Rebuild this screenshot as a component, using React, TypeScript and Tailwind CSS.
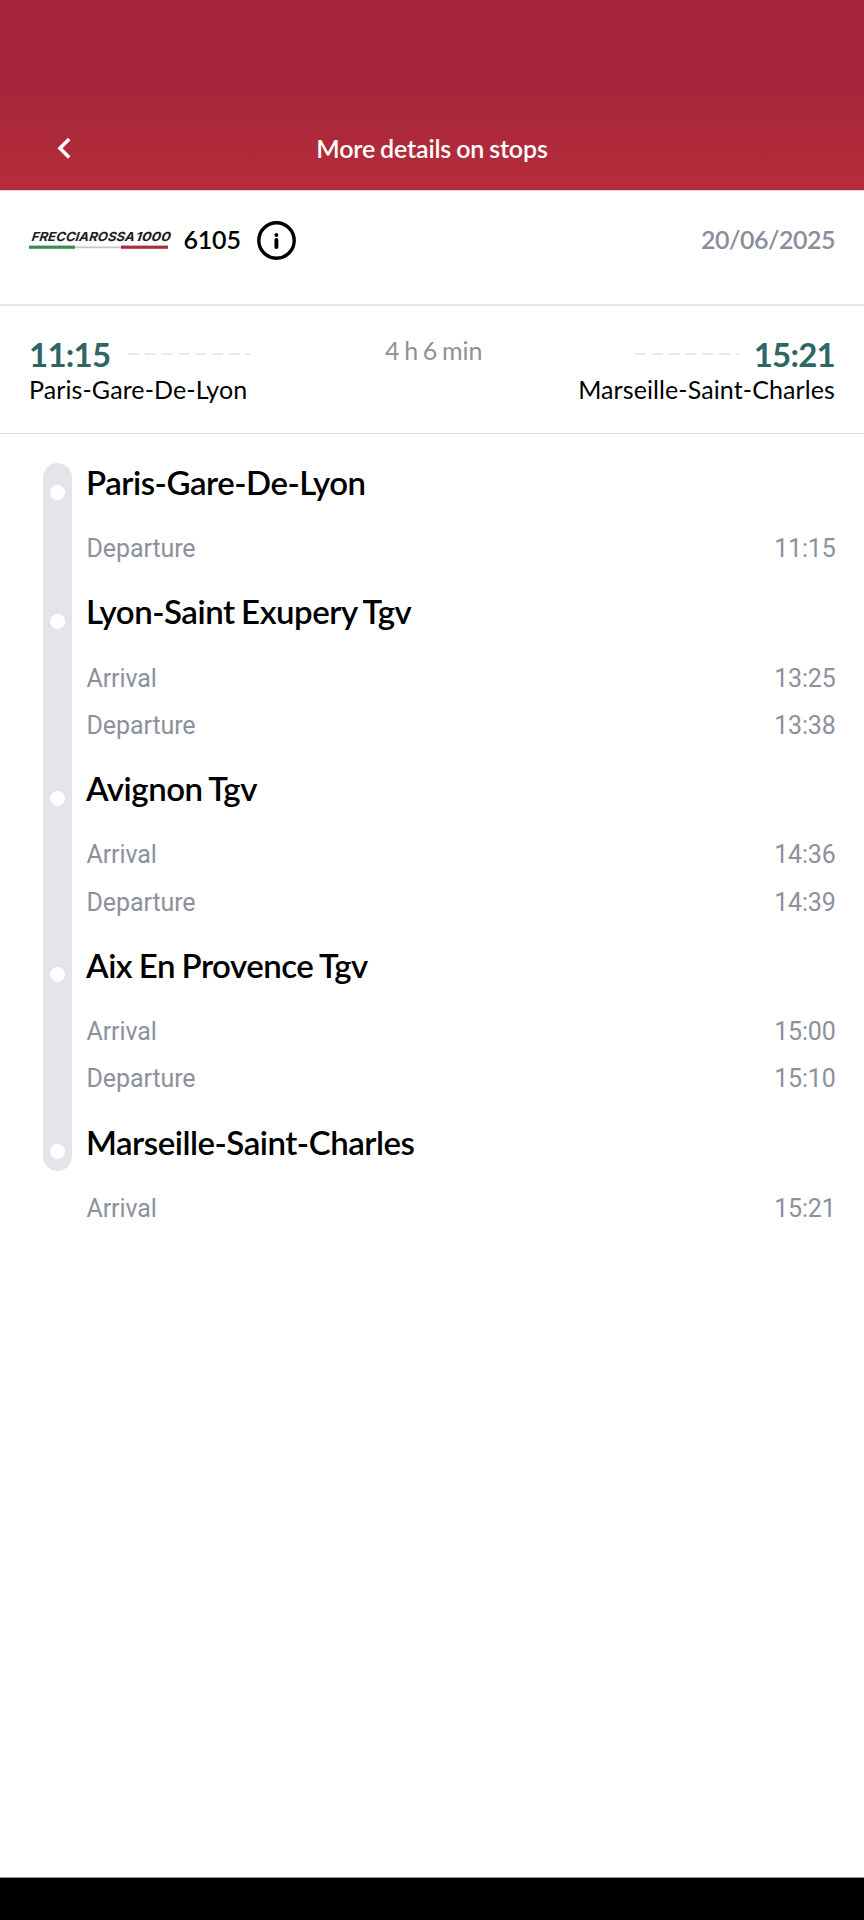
type StopTime = { label: string; time: string };
type Stop = { name: string; times: StopTime[] };

const stops: Stop[] = [
  { name: "Paris-Gare-De-Lyon", times: [{ label: "Departure", time: "11:15" }] },
  {
    name: "Lyon-Saint Exupery Tgv",
    times: [
      { label: "Arrival", time: "13:25" },
      { label: "Departure", time: "13:38" },
    ],
  },
  {
    name: "Avignon Tgv",
    times: [
      { label: "Arrival", time: "14:36" },
      { label: "Departure", time: "14:39" },
    ],
  },
  {
    name: "Aix En Provence Tgv",
    times: [
      { label: "Arrival", time: "15:00" },
      { label: "Departure", time: "15:10" },
    ],
  },
  { name: "Marseille-Saint-Charles", times: [{ label: "Arrival", time: "15:21" }] },
];

function TrainLogo() {
  return (
    <svg className="h-[22px] w-[144px] overflow-visible" viewBox="0 0 144 22">
      <g fill="#1d1d1b" transform="translate(2 0) skewX(-8)" className="font-['Inter',sans-serif] text-[12.4px] font-bold italic">
        <text x="2" y="12.4" textLength="103" lengthAdjust="spacingAndGlyphs">
          FRECCIAROSSA
        </text>
        <text x="106" y="12.4" textLength="35" lengthAdjust="spacingAndGlyphs">
          1000
        </text>
      </g>
      <rect x="0" y="16.6" width="46" height="3.2" fill="#3b8a4e" />
      <rect x="46" y="17.4" width="46" height="1.8" fill="#c9c9cb" />
      <rect x="92" y="16.6" width="47" height="3.2" fill="#a92d3a" />
    </svg>
  );
}

export default function App() {
  return (
    <div className="flex h-[1920px] w-[864px] flex-col overflow-hidden bg-white font-['Lato',sans-serif] text-black">
      <header className="grid h-[190px] shrink-0 grid-cols-[1fr_auto_1fr] items-end bg-linear-to-b from-[#a6273b] from-50% to-[#b72c3a] px-[52px] pb-[24px] text-white">
        <svg className="h-[36px] w-[24px]" viewBox="0 0 24 36" fill="none" stroke="currentColor" strokeWidth="3.6">
          <path d="M17.2 9 8 18.2l9.2 9.2" />
        </svg>
        <h1 className="text-[25px] leading-[36px] font-semibold tracking-[-0.16px] [word-spacing:-1px]">
          More details on stops
        </h1>
      </header>

      <section className="flex h-[116px] shrink-0 items-start justify-between border-t border-b-2 border-t-[#efd0d4] border-b-[#e5e6eb] px-[29px] pt-[29px]">
        <div className="flex h-[40px] items-center">
          <TrainLogo />
          <span className="ml-[10.5px] w-[57.5px] text-[25px] font-semibold tracking-[-0.2px]">6105</span>
          <svg className="ml-[16px] size-[39px]" viewBox="0 0 39 39" fill="none" stroke="black">
            <circle cx="19.5" cy="19.5" r="17.7" strokeWidth="3.4" />
            <path d="M19.4 18.9v7.2" strokeWidth="3.9" strokeLinecap="round" />
            <circle cx="19.4" cy="14" r="2" fill="black" stroke="none" />
          </svg>
        </div>
        <span className="text-[25px] leading-[39px] font-semibold tracking-[-0.5px] text-[#8a8e9a]">20/06/2025</span>
      </section>

      <section className="flex h-[128px] shrink-0 flex-col border-b border-[#dddee3] px-[29px] pt-[30px]">
        <div className="flex h-[36px] items-center">
          <span className="w-[82px] text-[33px] leading-[36px] font-bold tracking-[-0.75px] text-[#2f6664]">11:15</span>
          <svg className="ml-[17px] h-[2px] w-[122px]" viewBox="0 0 122 2">
            <path d="M0 1H122" stroke="#d4d5da" strokeWidth="1.2" strokeDasharray="11 5.8" />
          </svg>
          <span className="-mt-[9px] ml-[135px] text-[25px] leading-[32px] tracking-[-0.1px] [word-spacing:-1.5px] text-[#8d919d]">
            4 h 6 min
          </span>
          <svg className="ml-auto h-[2px] w-[104px]" viewBox="0 0 104 2">
            <path d="M0 1H104" stroke="#d4d5da" strokeWidth="1.2" strokeDasharray="11 5.8" />
          </svg>
          <span className="ml-[15px] text-[33px] leading-[36px] font-bold tracking-[-0.75px] text-[#2f6664]">15:21</span>
        </div>
        <div className="flex justify-between text-[25px] leading-[34px] tracking-[0.1px]">
          <span>Paris-Gare-De-Lyon</span>
          <span>Marseille-Saint-Charles</span>
        </div>
      </section>

      <main className="relative flex grow flex-col pt-[29px] pr-[28.5px] pl-[86.5px]">
        <div className="absolute top-[29px] left-[43px] h-[708px] w-[29px] rounded-full bg-[#e4e5eb]" />
        {stops.map((stop) => (
          <div key={stop.name} className="relative flex flex-col">
            <span className="absolute top-[21.5px] -left-[36.5px] size-[15px] rounded-full bg-white" />
            <h2 className="-ml-[0.5px] h-[82.3px] text-[33px] leading-[39px] font-semibold tracking-[-0.47px] [word-spacing:-1.2px]">
              {stop.name}
            </h2>
            {stop.times.map((t) => (
              <div
                key={t.label}
                className="-mt-px flex h-[48.2px] justify-between font-['Roboto',sans-serif] text-[25px] leading-[10px] text-[#8d919d]"
              >
                <span className="tracking-[-0.1px]">{t.label}</span>
                <span className="tracking-[-0.2px]">{t.time}</span>
              </div>
            ))}
          </div>
        ))}
      </main>

      <div className="h-[43px] shrink-0 border-t border-[#999999] bg-black" />
    </div>
  );
}
